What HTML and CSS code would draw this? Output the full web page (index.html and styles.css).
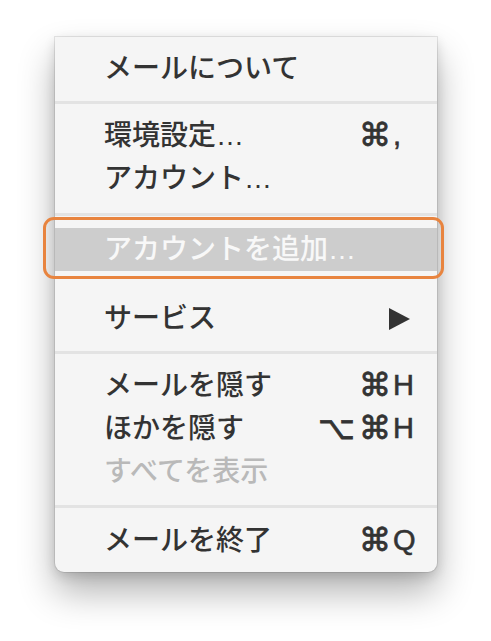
FILE: index.html
```html
<!DOCTYPE html>
<html lang="ja">
<head>
<meta charset="utf-8">
<link rel="stylesheet" href="styles.css">
</head>
<body>
<div class="menu">
  <div class="item"><span class="label">メールについて</span></div>
  <div class="sep sep-a"></div>
  <div class="item"><span class="label">環境設定…</span><span class="mods">⌘</span><span class="key">,</span></div>
  <div class="item"><span class="label">アカウント…</span></div>
  <div class="sep sep-b"></div>
  <div class="item hl"><span class="label">アカウントを追加…</span></div>
  <div class="sep sep-c sep-blank"></div>
  <div class="item"><span class="label">サービス</span><span class="mods"></span><span class="key"><svg class="arrow" width="21" height="22" viewBox="0 0 21 22"><polygon points="0,0 21,11 0,22" fill="#333"/></svg></span></div>
  <div class="sep sep-a"></div>
  <div class="item"><span class="label">メールを隠す</span><span class="mods">⌘</span><span class="key">H</span></div>
  <div class="item"><span class="label">ほかを隠す</span><span class="mods">⌥<span class="gap"></span>⌘</span><span class="key">H</span></div>
  <div class="item disabled"><span class="label">すべてを表示</span></div>
  <div class="sep sep-c"></div>
  <div class="item"><span class="label">メールを終了</span><span class="mods">⌘</span><span class="key">Q</span></div>
</div>
</body>
</html>
```
FILE: styles.css
```css
html, body {
  margin: 0;
  padding: 0;
  background: #ffffff;
}

body {
  padding: 37px 0 60px 55px;
  font-family: "Liberation Sans", "Noto Sans CJK JP", sans-serif;
}

.menu {
  width: 382px;
  box-sizing: border-box;
  background: #f5f5f5;
  border-radius: 0 0 9px 9px;
  padding: 10px 0 10px 0;
  box-shadow: 0 0 0 1px rgba(0, 0, 0, 0.09), 0 20px 36px rgba(0, 0, 0, 0.3), 0 4px 12px rgba(0, 0, 0, 0.14);
  color: #333333;
}

.item {
  position: relative;
  height: 43px;
  display: grid;
  grid-template-columns: 1fr auto 30px;
  align-items: center;
  padding: 0 14px 0 49px;
  font-size: 28px;
  line-height: 43px;
  font-weight: 500;
}

.label {
  white-space: nowrap;
}

.mods {
  font-family: "DejaVu Sans", sans-serif;
  font-size: 32px;
  font-weight: 400;
  -webkit-text-stroke: 0.8px currentColor;
  text-align: right;
  padding-right: 2px;
  display: flex;
  align-items: center;
  justify-content: flex-end;
}

.gap {
  display: inline-block;
  width: 4px;
}

.key {
  font-family: "Liberation Sans", sans-serif;
  font-size: 29px;
  font-weight: 400;
  -webkit-text-stroke: 0.6px currentColor;
  display: flex;
  align-items: center;
}

.arrow {
  display: block;
  margin-left: -4px;
}

.disabled {
  color: #b9b9b9;
}

.hl {
  background: #cdcdcd;
  color: #f8f8f8;
}

.hl::after {
  content: "";
  position: absolute;
  top: -11px;
  bottom: -8px;
  left: -12px;
  right: -7px;
  border: 3px solid #e8843f;
  border-radius: 11px;
}

.sep {
  display: flex;
  align-items: center;
}

.sep::before {
  content: "";
  display: block;
  width: 100%;
  height: 3px;
  background: #e3e3e3;
}

.sep-blank::before {
  background: transparent;
}

.sep-a { height: 24px; }
.sep-b { height: 28px; }
.sep-c { height: 26px; }
```
